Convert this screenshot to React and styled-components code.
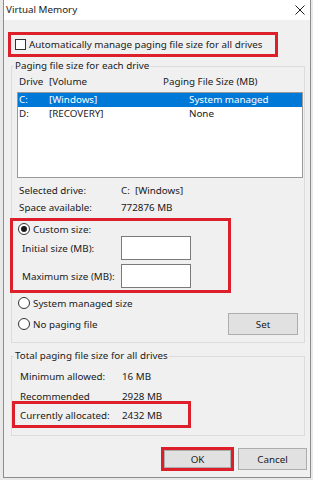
import styled, { createGlobalStyle } from "styled-components";

const GlobalStyle = createGlobalStyle`
  html, body {
    margin: 0;
    padding: 0;
  }
  body {
    background: #e9e9e9;
    font-family: "Noto Sans", "Open Sans", sans-serif;
    font-size: 9.8px;
    color: #1a1a1a;
  }
  * {
    box-sizing: border-box;
  }
`

const Screen = styled.div`
    width: 313px;
    height: 480px;
    padding: 0 2px 2px 3px;
`

const Window = styled.div`
    height: 478px;
    border: 1px solid #8c8c8c;
    border-top: none;
    background: #f0f0f0;
    display: flex;
    flex-direction: column;
`

const TitleBar = styled.div`
    height: 20px;
    background: #ffffff;
    display: flex;
    align-items: center;
    justify-content: space-between;
    padding: 0 5px 1px 2px;
`

const Title = styled.span`
    font-size: 9.8px;
`

const Body = styled.div`
    flex: 1;
    padding-top: 12px;
    display: flex;
    flex-direction: column;
`

const Highlight = styled.div`
    border: 3px solid #dc1f2b;
`

const AutoHighlight = styled(Highlight)`
    margin-left: 4px;
    width: 270px;
    height: 25px;
    display: flex;
    align-items: center;
    gap: 3px;
    padding-left: 4px;
    white-space: nowrap;
`

const CheckBox = styled.span`
    width: 11px;
    height: 11px;
    border: 1px solid #333;
    background: #fff;
`

const Group = styled.fieldset`
    margin: ${p => p.$top}px 0 0 7px;
    width: 294px;
    min-width: 0;
    padding: ${p => p.$pt}px 1px ${p => p.$pb}px 5px;
    border: 1px solid #dcdcdc;
`

const Legend = styled.legend`
    margin-left: -3px;
    padding: 0 1px;
    line-height: 14px;
    height: 14px;
`

const ColumnHeader = styled.div`
    display: grid;
    grid-template-columns: 30px 114px 1fr;
    height: 14px;
    line-height: 14px;
    padding-left: 2px;
`

const ListBox = styled.div`
    margin-top: 3px;
    height: 86px;
    border: 1px solid #9a9a9a;
    background: #fff;
`

const ListRow = styled.div`
    display: grid;
    grid-template-columns: 30px 140px 1fr;
    height: 14px;
    line-height: 14px;
    padding-left: 1px;
    background: ${p => (p.$selected ? "#0078d7" : "transparent")};
    color: ${p => (p.$selected ? "#fff" : "inherit")};
`

const InfoBlock = styled.div`
    margin-top: 4px;
`

const InfoRow = styled.div`
    display: grid;
    grid-template-columns: 102px 1fr;
    height: 17px;
    line-height: 17px;
    padding-left: 2px;
`

const CustomHighlight = styled(Highlight)`
    margin: 2px 0 0 -7px;
    width: 221px;
    padding: 1px 0 2px 0;
    display: flex;
    flex-direction: column;
`

const RadioRow = styled.div`
    display: flex;
    align-items: center;
    justify-content: space-between;
    height: ${p => p.$h || 14}px;
    margin-top: ${p => p.$mt || 0}px;
    padding-left: ${p => p.$pl || 1}px;
`

const RadioLabel = styled.label`
    display: flex;
    align-items: center;
    gap: 3px;
`

const Radio = styled.span`
    width: 12px;
    height: 12px;
    border-radius: 50%;
    border: 1px solid #333;
    background: #fff;
    display: grid;
    place-items: center;
    &::after {
        content: "";
        width: 6px;
        height: 6px;
        border-radius: 50%;
        background: ${p => (p.$checked ? "#1a1a1a" : "transparent")};
    }
`

const SizeRow = styled.div`
    display: grid;
    grid-template-columns: 99px 70px;
    align-items: center;
    height: 24px;
    margin-top: ${p => p.$mt || 0}px;
    padding-left: 9px;
    white-space: nowrap;
`

const SizeInput = styled.div`
    height: 24px;
    border: 1px solid #7a7a7a;
    background: #fff;
`

const Button = styled.div`
    width: ${p => p.$w}px;
    height: ${p => p.$h}px;
    margin-right: ${p => p.$mr || 0}px;
    background: #e1e1e1;
    border: 1px solid #adadad;
    display: grid;
    place-items: center;
`

const DataRow = styled.div`
    display: grid;
    grid-template-columns: 102px 1fr;
    height: 16px;
    line-height: 16px;
    padding-left: 3px;
    margin-top: ${p => p.$mt || 0}px;
`

const AllocHighlight = styled(Highlight)`
    margin: -4px 0 0 -5px;
    width: 179px;
    padding: 4px 0 1px 2px;
`

const ButtonBar = styled.div`
    margin-top: 11px;
    padding-right: 3px;
    display: flex;
    justify-content: flex-end;
    align-items: center;
    gap: 4px;
`

const OkHighlight = styled(Highlight)`
    width: 73px;
    height: 24px;
`

function CloseIcon() {
    return (
        <svg width="10" height="10" viewBox="0 0 10 10">
            <path d="M0.5 0.5 L9.5 9.5 M9.5 0.5 L0.5 9.5" stroke="#1a1a1a" strokeWidth="1" fill="none" />
        </svg>
    )
}

export default function App() {
    return (
        <Screen>
            <GlobalStyle />
            <Window>
                <TitleBar>
                    <Title>Virtual Memory</Title>
                    <CloseIcon />
                </TitleBar>
                <Body>
                    <AutoHighlight>
                        <CheckBox />
                        <span>Automatically manage paging file size for all drives</span>
                    </AutoHighlight>

                    <Group $top={2} $pt={2} $pb={7}>
                        <Legend>Paging file size for each drive</Legend>
                        <ColumnHeader>
                            <span>Drive</span>
                            <span>[Volume</span>
                            <span>Paging File Size (MB)</span>
                        </ColumnHeader>
                        <ListBox>
                            <ListRow $selected>
                                <span>C:</span>
                                <span>[Windows]</span>
                                <span>System managed</span>
                            </ListRow>
                            <ListRow>
                                <span>D:</span>
                                <span>[RECOVERY]</span>
                                <span>None</span>
                            </ListRow>
                        </ListBox>
                        <InfoBlock>
                            <InfoRow>
                                <span>Selected drive:</span>
                                <span>C:&nbsp;&nbsp;[Windows]</span>
                            </InfoRow>
                            <InfoRow>
                                <span>Space available:</span>
                                <span>772876 MB</span>
                            </InfoRow>
                        </InfoBlock>
                        <CustomHighlight>
                            <RadioRow $pl={5}>
                                <RadioLabel><Radio $checked />Custom size:</RadioLabel>
                            </RadioRow>
                            <SizeRow>
                                <span>Initial size (MB):</span>
                                <SizeInput />
                            </SizeRow>
                            <SizeRow $mt={4}>
                                <span>Maximum size (MB):</span>
                                <SizeInput />
                            </SizeRow>
                        </CustomHighlight>
                        <RadioRow $mt={3}>
                            <RadioLabel><Radio />System managed size</RadioLabel>
                        </RadioRow>
                        <RadioRow $mt={3} $h={22}>
                            <RadioLabel><Radio />No paging file</RadioLabel>
                            <Button $w={70} $h={22} $mr={5}>Set</Button>
                        </RadioRow>
                    </Group>

                    <Group $top={6} $pt={6} $pb={7}>
                        <Legend>Total paging file size for all drives</Legend>
                        <DataRow>
                            <span>Minimum allowed:</span>
                            <span>16 MB</span>
                        </DataRow>
                        <DataRow $mt={4}>
                            <span>Recommended</span>
                            <span>2928 MB</span>
                        </DataRow>
                        <AllocHighlight>
                            <DataRow>
                                <span>Currently allocated:</span>
                                <span>2432 MB</span>
                            </DataRow>
                        </AllocHighlight>
                    </Group>

                    <ButtonBar>
                        <OkHighlight>
                            <Button $w={67} $h={18}>OK</Button>
                        </OkHighlight>
                        <Button $w={69} $h={22}>Cancel</Button>
                    </ButtonBar>
                </Body>
            </Window>
        </Screen>
    )
}
